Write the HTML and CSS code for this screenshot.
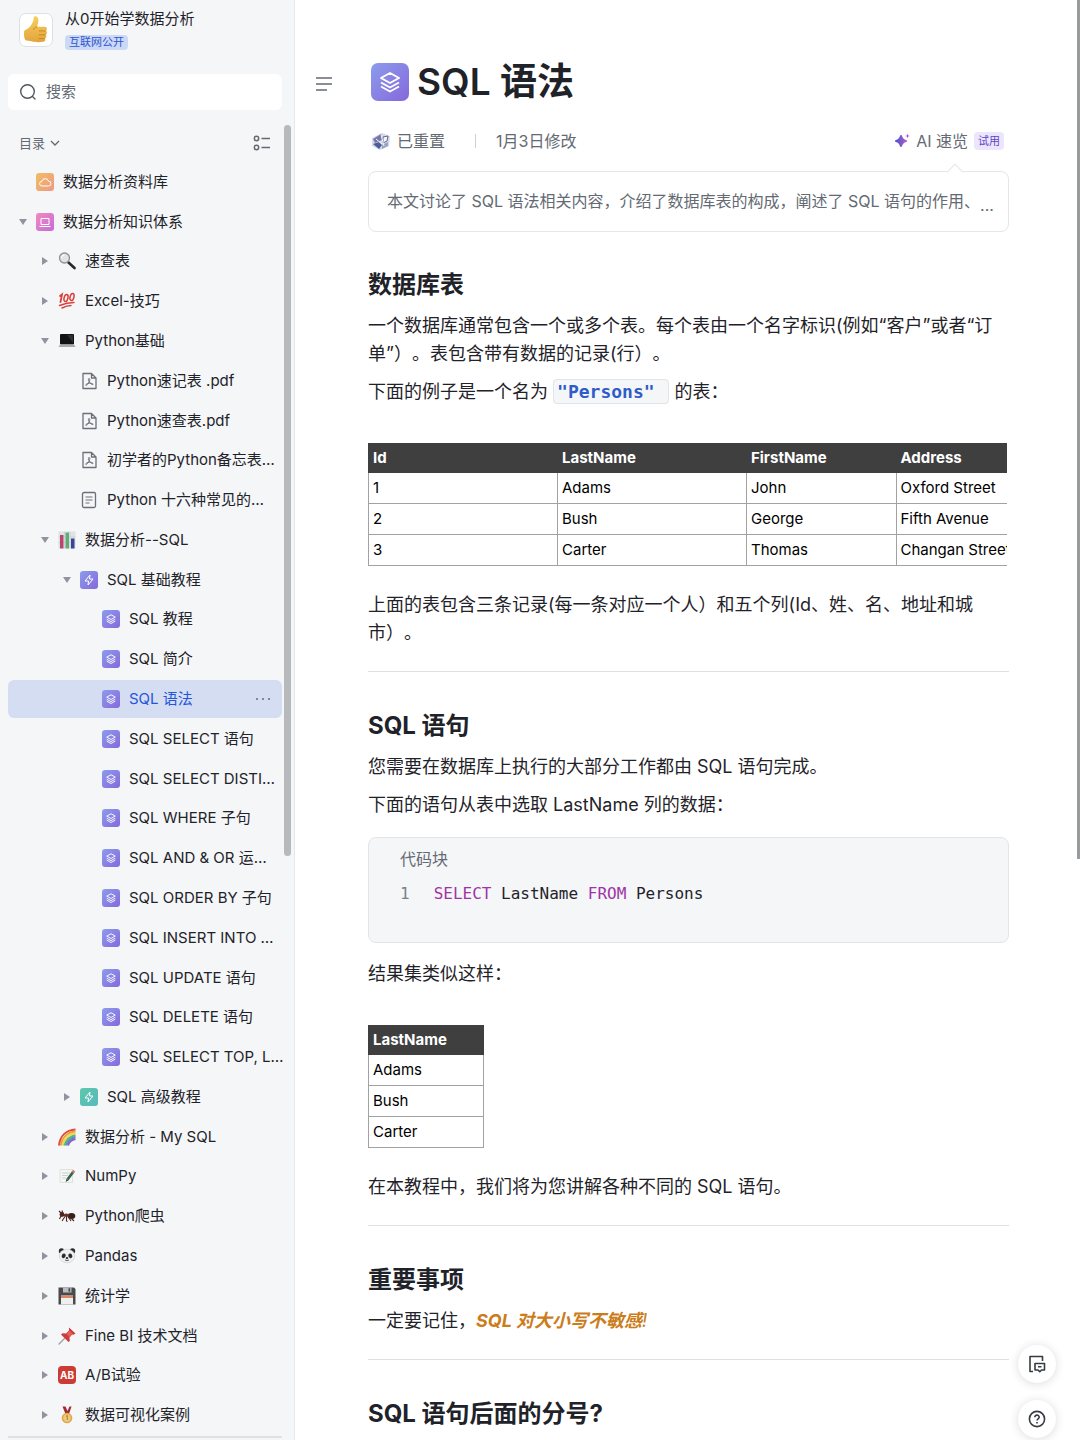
FILE: index.html
```html
<!DOCTYPE html>
<html lang="zh-CN">
<head>
    <meta charset="UTF-8">
    <meta name="viewport" content="width=device-width, initial-scale=1">
    <title>SQL 语法</title>
    <link rel="stylesheet" href="styles.css">
</head>
<body>
    <!-- Icon sprite -->
    <svg class="sprite" aria-hidden="true">
        <defs>
            <linearGradient id="g-purple" x1="0" y1="0" x2="1" y2="1"><stop offset="0" stop-color="#8c9cec"/><stop offset="1" stop-color="#8568dc"/></linearGradient>
            <linearGradient id="g-orange" x1="0" y1="0" x2="1" y2="1"><stop offset="0" stop-color="#f0bd62"/><stop offset="1" stop-color="#ee9a86"/></linearGradient>
            <linearGradient id="g-pink" x1="0" y1="0" x2="1" y2="1"><stop offset="0" stop-color="#f08ac0"/><stop offset="1" stop-color="#c86bd6"/></linearGradient>
            <linearGradient id="g-teal" x1="0" y1="0" x2="1" y2="1"><stop offset="0" stop-color="#5cc8ac"/><stop offset="1" stop-color="#58b8bd"/></linearGradient>
            <linearGradient id="g-ai" x1="0" y1="0" x2="1" y2="0"><stop offset="0" stop-color="#4c55d0"/><stop offset="1" stop-color="#b458c4"/></linearGradient>
            <linearGradient id="g-thumb" x1="0" y1="0" x2="0" y2="1"><stop offset="0" stop-color="#f7cf5c"/><stop offset="1" stop-color="#e2a43c"/></linearGradient>
        </defs>
        <symbol id="i-layers" viewBox="0 0 38 38">
            <rect width="38" height="38" rx="7" fill="url(#g-purple)"/>
            <path d="M19 10l9 5-9 5-9-5zM10 19.500l9 5 9-5M10 23.500l9 5 9-5" fill="none" stroke="#fff" stroke-width="2" stroke-linejoin="round"/>
        </symbol>
        <symbol id="i-bolt" viewBox="0 0 18 18">
            <rect width="18" height="18" rx="3" fill="url(#g-purple)"/>
            <path d="M10 4L5 10h3.500L8 14l5-6H9.500z" fill="none" stroke="#fff" stroke-linejoin="round"/>
        </symbol>
        <symbol id="i-bolt-teal" viewBox="0 0 18 18">
            <rect width="18" height="18" rx="3" fill="url(#g-teal)"/>
            <path d="M10 4L5 10h3.500L8 14l5-6H9.500z" fill="none" stroke="#fff" stroke-linejoin="round"/>
        </symbol>
        <symbol id="i-cloud" viewBox="0 0 18 18">
            <rect width="18" height="18" rx="3" fill="url(#g-orange)"/>
            <path d="M6 13a2.300 2.300 0 0 1-.2-4.600 3.500 3.500 0 0 1 6.800-.2A2.400 2.400 0 0 1 12.500 13z" fill="none" stroke="#fff"/>
        </symbol>
        <symbol id="i-board" viewBox="0 0 18 18">
            <rect width="18" height="18" rx="3" fill="url(#g-pink)"/>
            <path d="M5 5.500h8v6H5zM3.500 13.500h11" fill="none" stroke="#fff"/>
        </symbol>
        <symbol id="i-pdf" viewBox="0 0 18 18">
            <path d="M3 1.500h8.500L16 6v10.500H3zM11.500 1.500V6H16" fill="none" stroke="#6b7078" stroke-width="1.300" stroke-linejoin="round"/>
            <path d="M9 6.500c1.500 0 .6 3-.4 4.500S6 14 5.700 13.200s2-1.800 3.600-2 3.900.4 3.700 1.200S10.500 12 9.300 10 8.200 6.500 9 6.500z" fill="none" stroke="#6b7078"/>
        </symbol>
        <symbol id="i-doc" viewBox="0 0 18 18">
            <rect x="2.500" y="1.500" width="13" height="15" rx="1.500" fill="none" stroke="#6b7078" stroke-width="1.300"/>
            <path d="M5.500 6h7M5.500 9h7M5.500 12h4" stroke="#6b7078" stroke-width="1.200"/>
        </symbol>
        <symbol id="e-search" viewBox="0 0 18 18">
            <path d="M10.500 10.500l6 5.500" stroke="#26282b" stroke-width="2.600" stroke-linecap="round"/>
            <circle cx="6.500" cy="6" r="5" fill="#dfe4e6" stroke="#8d9294" stroke-width="1.300"/>
            <path d="M3.500 6a3 3 0 0 1 3-3" fill="none" stroke="#fff" stroke-width="1.200"/>
        </symbol>
        <symbol id="e-hundred" viewBox="0 0 18 18">
            <g fill="none" stroke="#d9423c" stroke-linecap="round">
                <path d="M2 4l2-1.500L2.500 10" stroke-width="1.800"/>
                <ellipse cx="8" cy="6" rx="1.900" ry="3.600" transform="rotate(14 8 6)" stroke-width="1.500"/>
                <ellipse cx="14" cy="5" rx="1.900" ry="3.600" transform="rotate(14 14 5)" stroke-width="1.500"/>
                <path d="M1.500 13.500Q9 10.500 16 10.500M4 16q5-2.500 9-2.500" stroke-width="1.400"/>
            </g>
        </symbol>
        <symbol id="e-laptop" viewBox="0 0 18 18">
            <rect x="2" y="2" width="14" height="10.500" rx="1" fill="#101214"/>
            <path d="M9 3h6v8z" fill="#2c3033"/>
            <path d="M2 12.500h14l1.500 2.500h-17z" fill="#a7a9ac"/>
        </symbol>
        <symbol id="e-chart" viewBox="0 0 18 18">
            <path d="M.5.500h17v17H.500z" fill="#dfe3e6"/>
            <path d="M.5 6h17M.5 11.500h17M6.500.500v17M12 .500v17" stroke="#c5cacf" stroke-width=".6"/>
            <path d="M2 4h3.500v13.500H2z" fill="#b8476c"/>
            <path d="M7.500 1.500H11v16H7.500z" fill="#5fae76"/>
            <path d="M13 7.500h3.500v10H13z" fill="#3b4596"/>
        </symbol>
        <symbol id="e-rainbow" viewBox="0 0 18 18">
            <g fill="none" stroke-width="2">
                <path d="M1 17.500C2 8 8 2 17.500 1.500" stroke="#dd4b3c"/>
                <path d="M2.800 17.500C4 10 9 4 17.500 3.400" stroke="#ee9c3c"/>
                <path d="M4.600 17.500C6 11 10.500 6 17.500 5.300" stroke="#efd84f"/>
                <path d="M6.400 17.500C8 12.500 12 8 17.500 7.200" stroke="#62b765"/>
                <path d="M8.200 17.500C9.500 14 13 10 17.500 9.100" stroke="#4d91d8"/>
                <path d="M10 17.500c1-3 4-6 7.500-6.500" stroke="#8d62b8"/>
            </g>
        </symbol>
        <symbol id="e-memo" viewBox="0 0 18 18">
            <path d="M2 2.500h12.500v13H2z" fill="#f5f5f3" stroke="#d5d7d8" stroke-width=".7"/>
            <path d="M4 6h8M4 8.500h6M4 11h4" stroke="#c3c6c8" stroke-width=".8"/>
            <path d="M15.500 4.500l-6 8" stroke="#2e6650" stroke-width="2.600"/>
            <path d="M14.600 5.600l1.500-2" stroke="#d9746c" stroke-width="2.600"/>
            <path d="M8.400 11.800L7.700 15l2.900-1.700z" fill="#42403c"/>
        </symbol>
        <symbol id="e-ant" viewBox="0 0 18 18">
            <ellipse cx="13.500" cy="9" rx="3.800" ry="2.900" fill="#3b1d1a"/>
            <ellipse cx="8.300" cy="8.300" rx="2.500" ry="1.800" fill="#63302a"/>
            <circle cx="4" cy="7.500" r="2.400" fill="#4c2420"/>
            <path d="M3 6L1 4M4.500 5.500L4 3.500M7 9.500L4 14M8.500 9.500V14l1 .5M10 9.500l3 4.500M12 10l4 4M3 9l-1.500 3" fill="none" stroke="#4c2420" stroke-width="1.100"/>
        </symbol>
        <symbol id="e-panda" viewBox="0 0 18 18">
            <circle cx="3.500" cy="4" r="2.700" fill="#2a2c2e"/>
            <circle cx="14.500" cy="4" r="2.700" fill="#2a2c2e"/>
            <ellipse cx="9" cy="9" rx="7.800" ry="6.800" fill="#eff0f0" stroke="#c9cbcc" stroke-width=".6"/>
            <ellipse cx="5.700" cy="8.800" rx="1.900" ry="2.400" transform="rotate(30 5.700 8.800)" fill="#2a2c2e"/>
            <ellipse cx="12.300" cy="8.800" rx="1.900" ry="2.400" transform="rotate(-30 12.300 8.800)" fill="#2a2c2e"/>
            <ellipse cx="9" cy="11" rx="1.300" ry=".9" fill="#2a2c2e"/>
            <path d="M7 13q2 1 4 0" fill="none" stroke="#2a2c2e" stroke-width=".8"/>
        </symbol>
        <symbol id="e-floppy" viewBox="0 0 18 18">
            <path d="M.5.500h15.500l1.500 1.500v15.500H.500z" fill="#484a4e"/>
            <path d="M5 .500h8.500v5H5z" fill="#b9bdc0"/>
            <path d="M10.500 1.200h1.700v3.500h-1.700z" fill="#484a4e"/>
            <path d="M3 8.500h12v9H3z" fill="#eef0f0"/>
            <path d="M3 8.500h12V11H3z" fill="#db8560"/>
        </symbol>
        <symbol id="e-pin" viewBox="0 0 18 18">
            <path d="M6.500 11.500L1 17" stroke="#9ea3a6" stroke-width="1.400" stroke-linecap="round"/>
            <path d="M11 .500l6.500 6-2 1.200-1.300-.2-2.700 3 .3 3.500-1.300 1L3 7.500l1.500-1.200 3.500.2L11 3.500z" fill="#cf3a3c"/>
            <path d="M11.500 3.500l3 3-3 3.500-3-3z" fill="#e6605a"/>
        </symbol>
        <symbol id="e-medal" viewBox="0 0 18 18">
            <path d="M4.500.500h3L9.500 5l2-4.500h2L11 8H7.500z" fill="#9e2e31"/>
            <circle cx="9" cy="12" r="5.300" fill="#dca94e"/>
            <circle cx="9" cy="12" r="3.700" fill="#efca7c"/>
            <path d="M8 10.500l1.300-1V14" fill="none" stroke="#b07d2c"/>
        </symbol>
    </svg>

    <div class="app">
        <!-- Sidebar -->
        <aside class="sidebar">
            <header class="space">
                <div class="space-logo">
                    <svg viewBox="0 0 28 32" width="26" height="30" aria-hidden="true">
                        <path d="M1.500 16.500C5 15 7.500 13 9.500 9.500 11 7 11.500 5 11.500 3c0-2.500 4.500-2.500 5 1.500.3 3-.5 5.500-1.500 8h8.500c3 0 3 4 .8 4.300 2.200.5 2 4-.2 4.300 1.700.6 1.300 3.700-.7 4 1.300.8.600 3.400-1.400 3.600-4 .6-9.500.6-12.500-.5-2.500-.8-4.500-.9-6.500-.9C.8 25 .8 19 1.500 16.500z" fill="url(#g-thumb)"/>
                        <path d="M24 17h-6.500M24 21.200h-6.500M23 25.200h-5.500M15 12.500c-2 .5-3 1.500-3.500 3" fill="none" stroke="#c98422" stroke-linecap="round"/>
                    </svg>
                </div>
                <div>
                    <div class="space-name">从0开始学数据分析</div>
                    <span class="space-tag">互联网公开</span>
                </div>
            </header>

            <label class="search">
                <svg viewBox="0 0 18 18" width="18" height="18" fill="none" stroke="#51565d" stroke-width="1.400" stroke-linecap="round" aria-hidden="true"><circle cx="8.500" cy="8.500" r="6.800"/><path d="M13.500 13.500l2.500 2.500"/></svg>
                <input type="text" placeholder="搜索" aria-label="搜索">
            </label>

            <div class="toc-bar">
                <button class="toc-toggle">目录
                    <svg viewBox="0 0 10 10" width="10" height="10" fill="none" stroke="#646a73" stroke-width="1.300" aria-hidden="true"><path d="M1 3l4 4 4-4"/></svg>
                </button>
                <button class="icon-btn" aria-label="列表设置">
                    <svg viewBox="0 0 18 16" width="18" height="16" fill="none" stroke="#646a73" stroke-width="1.500" aria-hidden="true"><circle cx="3.500" cy="3.500" r="2.200"/><circle cx="3.500" cy="12.500" r="2.200"/><path d="M8.500 3.500H17M8.500 12.500H17"/></svg>
                </button>
            </div>

            <ul class="tree">
                <li class="row lv1"><span class="caret"></span><svg><use href="#i-cloud"/></svg><a href="#">数据分析资料库</a></li>
                <li class="row lv1"><button class="caret open" aria-label="收起"></button><svg><use href="#i-board"/></svg><a href="#">数据分析知识体系</a></li>
                <li class="row lv2"><button class="caret closed" aria-label="展开"></button><svg><use href="#e-search"/></svg><a href="#">速查表</a></li>
                <li class="row lv2"><button class="caret closed" aria-label="展开"></button><svg><use href="#e-hundred"/></svg><a href="#">Excel-技巧</a></li>
                <li class="row lv2"><button class="caret open" aria-label="收起"></button><svg><use href="#e-laptop"/></svg><a href="#">Python基础</a></li>
                <li class="row lv3"><span class="caret"></span><svg><use href="#i-pdf"/></svg><a href="#">Python速记表 .pdf</a></li>
                <li class="row lv3"><span class="caret"></span><svg><use href="#i-pdf"/></svg><a href="#">Python速查表.pdf</a></li>
                <li class="row lv3"><span class="caret"></span><svg><use href="#i-pdf"/></svg><a href="#">初学者的Python备忘表…</a></li>
                <li class="row lv3"><span class="caret"></span><svg><use href="#i-doc"/></svg><a href="#">Python 十六种常见的…</a></li>
                <li class="row lv2"><button class="caret open" aria-label="收起"></button><svg><use href="#e-chart"/></svg><a href="#">数据分析--SQL</a></li>
                <li class="row lv3"><button class="caret open" aria-label="收起"></button><svg><use href="#i-bolt"/></svg><a href="#">SQL 基础教程</a></li>
                <li class="row lv4"><span class="caret"></span><svg><use href="#i-layers"/></svg><a href="#">SQL 教程</a></li>
                <li class="row lv4"><span class="caret"></span><svg><use href="#i-layers"/></svg><a href="#">SQL 简介</a></li>
                <li class="row lv4 active"><span class="caret"></span><svg><use href="#i-layers"/></svg><a href="#">SQL 语法</a><button class="more" aria-label="更多"><i></i><i></i><i></i></button></li>
                <li class="row lv4"><span class="caret"></span><svg><use href="#i-layers"/></svg><a href="#">SQL SELECT 语句</a></li>
                <li class="row lv4"><span class="caret"></span><svg><use href="#i-layers"/></svg><a href="#">SQL SELECT DISTI…</a></li>
                <li class="row lv4"><span class="caret"></span><svg><use href="#i-layers"/></svg><a href="#">SQL WHERE 子句</a></li>
                <li class="row lv4"><span class="caret"></span><svg><use href="#i-layers"/></svg><a href="#">SQL AND &amp; OR 运…</a></li>
                <li class="row lv4"><span class="caret"></span><svg><use href="#i-layers"/></svg><a href="#">SQL ORDER BY 子句</a></li>
                <li class="row lv4"><span class="caret"></span><svg><use href="#i-layers"/></svg><a href="#">SQL INSERT INTO …</a></li>
                <li class="row lv4"><span class="caret"></span><svg><use href="#i-layers"/></svg><a href="#">SQL UPDATE 语句</a></li>
                <li class="row lv4"><span class="caret"></span><svg><use href="#i-layers"/></svg><a href="#">SQL DELETE 语句</a></li>
                <li class="row lv4"><span class="caret"></span><svg><use href="#i-layers"/></svg><a href="#">SQL SELECT TOP, L…</a></li>
                <li class="row lv3"><button class="caret closed" aria-label="展开"></button><svg><use href="#i-bolt-teal"/></svg><a href="#">SQL 高级教程</a></li>
                <li class="row lv2"><button class="caret closed" aria-label="展开"></button><svg><use href="#e-rainbow"/></svg><a href="#">数据分析 - My SQL</a></li>
                <li class="row lv2"><button class="caret closed" aria-label="展开"></button><svg><use href="#e-memo"/></svg><a href="#">NumPy</a></li>
                <li class="row lv2"><button class="caret closed" aria-label="展开"></button><svg><use href="#e-ant"/></svg><a href="#">Python爬虫</a></li>
                <li class="row lv2"><button class="caret closed" aria-label="展开"></button><svg><use href="#e-panda"/></svg><a href="#">Pandas</a></li>
                <li class="row lv2"><button class="caret closed" aria-label="展开"></button><svg><use href="#e-floppy"/></svg><a href="#">统计学</a></li>
                <li class="row lv2"><button class="caret closed" aria-label="展开"></button><svg><use href="#e-pin"/></svg><a href="#">Fine BI 技术文档</a></li>
                <li class="row lv2"><button class="caret closed" aria-label="展开"></button><span class="ab">AB</span><a href="#">A/B试验</a></li>
                <li class="row lv2"><button class="caret closed" aria-label="展开"></button><svg><use href="#e-medal"/></svg><a href="#">数据可视化案例</a></li>
            </ul>
            <div class="sidebar-thumb"></div>
        </aside>

        <!-- Document -->
        <main class="main">
            <button class="icon-btn outline-btn" aria-label="目录">
                <svg viewBox="0 0 18 16" width="18" height="16" stroke="#646a73" stroke-width="1.500" aria-hidden="true"><path d="M1 2h16M1 8h16M1 14h11"/></svg>
            </button>

            <article class="doc">
                <h1><svg width="38" height="38" aria-hidden="true"><use href="#i-layers"/></svg>SQL 语法</h1>

                <div class="meta">
                    <svg viewBox="0 0 20 20" width="20" height="20" aria-hidden="true">
                        <path d="M1 7l10-5 8 3-1 10-9 4-8-4z" fill="#d4d8ea"/>
                        <path d="M2 8l8-5 1 6-7 3z" fill="#7a76a8"/>
                        <path d="M2 13l6-2 3 3-3 4z" fill="#4d5f98"/>
                        <path d="M12 6l5-1-1 5-4 2z" fill="#f5f6fb" stroke="#606889"/>
                        <path d="M11 14l6-3v4l-6 3z" fill="#99a4c5"/>
                        <path d="M5 8l6 5M10 4l3 11" stroke="#f2f3fa"/>
                    </svg>
                    <span>已重置</span>
                    <span class="divider"></span>
                    <span>1月3日修改</span>
                    <button class="ai">
                        <svg viewBox="0 0 16 16" width="16" height="16" aria-hidden="true"><path d="M7 3c.8 3.200 2 4.400 5 5-3 .6-4.200 1.800-5 5-.8-3.200-2-4.400-5-5 3-.6 4.200-1.800 5-5z" fill="url(#g-ai)" stroke="url(#g-ai)" stroke-width="2" stroke-linejoin="round"/><path d="M13.500.500l.6 1.900 1.900.6-1.900.6-.6 1.900-.6-1.900-1.900-.6 1.900-.6z" fill="#b458c4"/></svg>
                        AI 速览 <span class="trial">试用</span>
                    </button>
                </div>

                <div class="summary">
                    <span>本文讨论了 SQL 语法相关内容，介绍了数据库表的构成，阐述了 SQL 语句的作用、</span><span class="dots">...</span>
                </div>

                <h2>数据库表</h2>
                <p>一个数据库通常包含一个或多个表。每个表由一个名字标识(例如“客户”或者“订单”）。表包含带有数据的记录(行）。</p>
                <p>下面的例子是一个名为 <code class="inline-code">"Persons" </code> 的表：</p>

                <div class="table-wrap">
                    <table class="persons">
                        <thead>
                            <tr><th class="col-wide">Id</th><th class="col-wide">LastName</th><th>FirstName</th><th>Address</th></tr>
                        </thead>
                        <tbody>
                            <tr><td>1</td><td>Adams</td><td>John</td><td>Oxford Street</td></tr>
                            <tr><td>2</td><td>Bush</td><td>George</td><td>Fifth Avenue</td></tr>
                            <tr><td>3</td><td>Carter</td><td>Thomas</td><td>Changan Street</td></tr>
                        </tbody>
                    </table>
                </div>

                <p>上面的表包含三条记录(每一条对应一个人）和五个列(Id、姓、名、地址和城市）。</p>
                <hr>

                <h2>SQL 语句</h2>
                <p>您需要在数据库上执行的大部分工作都由 SQL 语句完成。</p>
                <p>下面的语句从表中选取 LastName 列的数据：</p>

                <div class="code-block">
                    <div class="code-title">代码块</div>
                    <div class="code-line"><span class="line-no">1</span><code><b>SELECT</b> LastName <b>FROM</b> Persons</code></div>
                </div>

                <p>结果集类似这样：</p>

                <div class="table-wrap">
                    <table class="result">
                        <thead>
                            <tr><th>LastName</th></tr>
                        </thead>
                        <tbody>
                            <tr><td>Adams</td></tr>
                            <tr><td>Bush</td></tr>
                            <tr><td>Carter</td></tr>
                        </tbody>
                    </table>
                </div>

                <p>在本教程中，我们将为您讲解各种不同的 SQL 语句。</p>
                <hr>

                <h2>重要事项</h2>
                <p>一定要记住，<em class="warn"><b>SQL 对大小写不敏感</b>!</em></p>
                <hr>

                <h2>SQL 语句后面的分号?</h2>
            </article>

            <div class="page-thumb"></div>
        </main>
    </div>

    <!-- Floating buttons -->
    <div class="floats">
        <button aria-label="评论">
            <svg viewBox="0 0 18 18" width="18" height="18" fill="none" stroke="#373c43" stroke-width="1.600" stroke-linejoin="round" aria-hidden="true"><path d="M5 16.500H2v-15h12.500V6"/><path d="M7 8.500h9.500v6.500h-3l-1.700 1.700L10 15H7zM10 11.700h3.500"/></svg>
        </button>
        <button aria-label="帮助">
            <svg viewBox="0 0 18 18" width="18" height="18" fill="none" stroke="#373c43" stroke-width="1.600" aria-hidden="true"><circle cx="9" cy="9" r="7.600"/><path d="M6.800 7.300c0-3 4.500-2.700 4.400 0 0 1.500-2.200 1.500-2.200 3.200M9 12v1.500"/></svg>
        </button>
    </div>
</body>
</html>
```

FILE: styles.css
```css
* {
    box-sizing: border-box;
}
body {
    margin: 0;
    font-family: Inter, "Noto Sans CJK SC", sans-serif;
    font-size: 15px;
    color: #1f2329;
    background: #fff;
    text-spacing-trim: space-all;
}
button {
    padding: 0;
    border: 0;
    background: none;
    font: inherit;
    color: inherit;
}
a {
    color: inherit;
    text-decoration: none;
}
.sprite {
    position: absolute;
    width: 0;
    height: 0;
}
.app {
    display: flex;
    height: 100vh;
    overflow: hidden;
}

/* Sidebar */
.sidebar {
    position: relative;
    display: flex;
    flex-direction: column;
    flex: 0 0 295px;
    min-width: 0;
    padding: 8px 12px 2px 8px;
    background: #f4f6f8;
    border-right: 1px solid #e6e8eb;
}
.space {
    display: flex;
    gap: 12px;
    height: 44px;
    padding-left: 11px;
}
.space-logo {
    display: flex;
    align-items: center;
    justify-content: center;
    width: 34px;
    height: 34px;
    margin-top: 5px;
    background: #fff;
    border: 1px solid #dee0e3;
    border-radius: 7px;
}
.space-name {
    line-height: 22px;
    margin-bottom: 5px;
}
.space-tag {
    display: block;
    width: max-content;
    padding: 0 4px;
    font-size: 11px;
    line-height: 15px;
    color: #2b57d0;
    background: #cbd8f6;
    border-radius: 4px;
}
.search {
    display: flex;
    align-items: center;
    gap: 9px;
    height: 36px;
    margin: 22px 0 16px;
    padding: 0 11px;
    background: #fff;
    border-radius: 6px;
}
.search input {
    flex: 1;
    min-width: 0;
    padding: 0 0 2px;
    border: 0;
    outline: 0;
    font: inherit;
}
.search input::placeholder {
    color: #646a73;
}
.toc-bar {
    display: flex;
    align-items: center;
    justify-content: space-between;
    height: 34px;
    padding: 0 11px;
}
.toc-toggle {
    display: flex;
    align-items: center;
    gap: 5px;
    font-size: 13px;
    line-height: 18px;
    color: #646a73;
}
.icon-btn {
    display: flex;
}
.tree {
    display: grid;
    flex: 1;
    grid-template-columns: minmax(0, 1fr);
    grid-auto-rows: 1fr;
    gap: 2px;
    margin: 3px 0 0;
    padding: 0 0 2px;
    list-style: none;
    border-bottom: 2px solid #dfe1e4;
}
.row {
    display: flex;
    align-items: center;
    border-radius: 6px;
    white-space: nowrap;
}
.row a {
    line-height: 20px;
}
.lv1 {
    padding-left: 10px;
}
.lv2 {
    padding-left: 32px;
}
.lv3 {
    padding-left: 54px;
}
.lv4 {
    padding-left: 76px;
}
.row svg,
.ab {
    flex: none;
    width: 18px;
    height: 18px;
    margin: 0 9px 0 8px;
}
.ab {
    font-size: 10px;
    font-weight: 700;
    line-height: 18px;
    text-align: center;
    color: #fff;
    background: #cd3b35;
    border-radius: 4px;
}
.caret {
    display: flex;
    align-items: center;
    justify-content: center;
    flex: 0 0 10px;
    height: 10px;
}
.caret.open::before,
.caret.closed::before {
    content: "";
    border: 4px solid transparent;
}
.caret.open::before {
    border-top: 6px solid #8f959e;
    border-bottom: 0;
}
.caret.closed::before {
    border-left: 6px solid #8f959e;
    border-right: 0;
}
.active {
    background: #d5ddf3;
    color: #2456d6;
}
.more {
    display: flex;
    gap: 4px;
    margin-left: auto;
    padding-right: 12px;
}
.more i {
    width: 2px;
    height: 2px;
    background: #646a73;
    border-radius: 1px;
}
.sidebar-thumb {
    position: absolute;
    top: 125px;
    right: 3px;
    width: 7px;
    height: 731px;
    background: #b7b9bc;
    border-radius: 4px;
}

/* Document */
.main {
    position: relative;
    display: flex;
    flex: 1;
    align-items: flex-start;
    min-width: 0;
    padding: 58px 71px 0 20px;
}
.outline-btn {
    margin: 18px 35px 0 0;
}
.doc {
    flex: 1;
    min-width: 0;
    font-size: 18px;
}
h1 {
    display: flex;
    align-items: center;
    gap: 8px;
    margin: 0;
    padding-left: 3px;
    font-size: 37px;
    font-weight: 600;
    line-height: 48px;
}
.meta {
    display: flex;
    align-items: center;
    gap: 6px;
    margin: 23px 0 18px;
    padding: 0 5px 0 3px;
    font-size: 16px;
    line-height: 24px;
    color: #646a73;
}
.divider {
    width: 1px;
    height: 14px;
    margin: 0 14px 0 24px;
    background: #d0d3d6;
}
.ai {
    display: flex;
    align-items: center;
    gap: 6px;
    margin-left: auto;
}
.trial {
    padding: 0 4px;
    font-size: 11px;
    line-height: 18px;
    color: #6344c8;
    background: #ebe6fb;
    border-radius: 4px;
}
.summary {
    position: relative;
    display: flex;
    height: 61px;
    padding: 0 12px 0 18px;
    font-size: 16px;
    line-height: 59px;
    color: #646a73;
    white-space: nowrap;
    border: 1px solid #e4e6e9;
    border-radius: 8px;
}
.summary::before {
    content: "";
    position: absolute;
    top: -6px;
    right: 47px;
    width: 11px;
    height: 11px;
    background: #fff;
    border: 1px solid #e4e6e9;
    border-width: 1px 0 0 1px;
    transform: rotate(45deg);
}
.dots {
    padding-top: 4px;
}
h2 {
    margin: 37px 0 11px;
    font-size: 24px;
    font-weight: 700;
    line-height: 32px;
}
p {
    margin: 0 0 10px;
    line-height: 28px;
}
hr {
    margin: 24px 0 38px;
    border: 0;
    border-top: 1px solid #dee0e3;
}
.inline-code {
    padding: 1px 3px;
    font-family: "DejaVu Sans Mono", monospace;
    font-size: 18px;
    font-weight: 700;
    line-height: 20px;
    color: #2f5cc8;
    white-space: pre;
    background: #f4f6f8;
    border: 1px solid #e2e5e8;
    border-radius: 4px;
}
.table-wrap {
    margin: 37px 2px 25px 0;
    overflow: hidden;
}
table {
    border-collapse: collapse;
    table-layout: fixed;
    font-size: 15px;
    line-height: 20px;
    color: #000;
}
.persons {
    width: 678px;
}
.result {
    width: 116px;
}
.col-wide {
    width: 189px;
}
th,
td {
    padding: 5px 4px;
    text-align: left;
    border: 1px solid #a2a2a2;
}
th {
    padding: 4px;
    color: #fff;
    background: #3f3f3f;
    border-color: #3f3f3f;
}
.code-block {
    height: 106px;
    margin: 18px 0 17px;
    padding: 8px 31px;
    background: #f4f6f8;
    border: 1px solid #e2e5e8;
    border-radius: 8px;
}
.code-title {
    font-size: 16px;
    line-height: 26px;
    color: #646a73;
}
.code-line {
    display: flex;
    gap: 24px;
    margin-top: 8px;
    font-family: "DejaVu Sans Mono", monospace;
    font-size: 16px;
    line-height: 28px;
}
.code-line code {
    font: inherit;
}
.code-line b {
    font-weight: 400;
    color: #a033a5;
}
.line-no {
    color: #7a8088;
}
.warn {
    color: #cb7d1c;
}
.page-thumb {
    position: absolute;
    top: 0;
    right: 0;
    width: 3px;
    height: 859px;
    background: #9a9b9d;
}

/* Floating buttons */
.floats {
    position: fixed;
    right: 24px;
    bottom: 2px;
    display: flex;
    flex-direction: column;
    gap: 17px;
}
.floats button {
    display: flex;
    align-items: center;
    justify-content: center;
    width: 38px;
    height: 38px;
    background: #fff;
    border-radius: 50%;
    box-shadow: 0 1px 10px rgba(31, 35, 41, 0.16);
}
```
